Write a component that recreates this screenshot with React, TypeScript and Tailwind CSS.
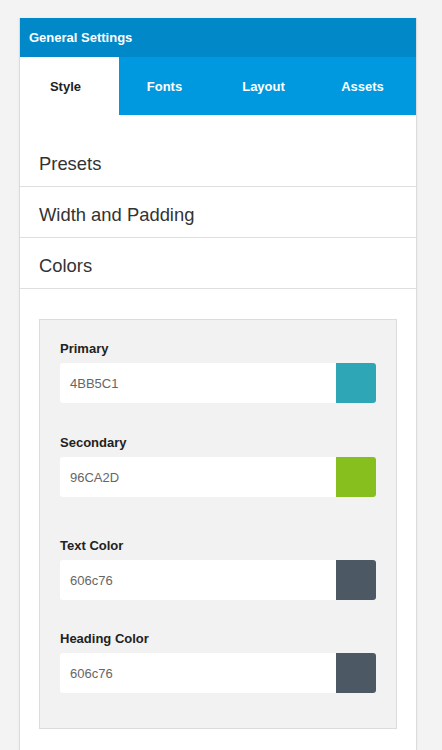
import { useState } from 'react'

type ColorField = {
  label: string
  value: string
  swatch: string
  gap: string
}

const tabs = ['Style', 'Fonts', 'Layout', 'Assets']
const sections = ['Presets', 'Width and Padding', 'Colors']

const colorFields: ColorField[] = [
  { label: 'Primary', value: '4BB5C1', swatch: '#2ea6b6', gap: 'mt-0' },
  { label: 'Secondary', value: '96CA2D', swatch: '#86bf1e', gap: 'mt-[32px]' },
  { label: 'Text Color', value: '606c76', swatch: '#4c5863', gap: 'mt-[41px]' },
  { label: 'Heading Color', value: '606c76', swatch: '#4c5863', gap: 'mt-[31px]' },
]

export default function App() {
  const [activeTab, setActiveTab] = useState('Style')

  return (
    <div
      className="min-h-[750px] bg-[#f3f3f3] pt-[18px]"
      style={{ fontFamily: '"Liberation Sans", Arial, sans-serif' }}
    >
      <div className="ml-[19px] w-[398px] min-h-[732px] bg-white border-x border-[#dcdcdc] shadow-[0_0_2px_rgba(0,0,0,0.06)]">
        {/* Header */}
        <div className="h-[39px] bg-[#0088c8] flex items-center pl-[9px] text-[13px] font-bold text-white">
          General Settings
        </div>

        {/* Tabs */}
        <div className="grid grid-cols-4 h-[58px] bg-[#0099e0]">
          {tabs.map(tab => (
            <button
              key={tab}
              onClick={() => setActiveTab(tab)}
              className={
                activeTab === tab
                  ? 'flex items-center justify-center pr-[8px] pt-[1px] text-[13px] font-bold bg-white text-[#222]'
                  : 'flex items-center justify-center pr-[8px] pt-[1px] text-[13px] font-bold text-white'
              }
            >
              {tab}
            </button>
          ))}
        </div>

        {/* Sections */}
        <div className="pt-[21px]">
          {sections.map(section => (
            <div
              key={section}
              className="h-[51px] flex items-center pt-[6px] pl-[19px] border-b border-[#dedede] text-[18.4px] text-[#333]"
            >
              {section}
            </div>
          ))}
        </div>

        {/* Colors panel */}
        <div className="px-[19px] pt-[30px] pb-[20px]">
          <div className="bg-[#f2f2f2] border border-[#dcdcdc] px-[20px] pt-[21px] pb-[35px]">
            {colorFields.map(field => (
              <div key={field.label} className={field.gap}>
                <div className="text-[13px] leading-[16px] font-bold text-[#222] mb-[6px]">
                  {field.label}
                </div>
                <div className="flex h-[40px] rounded-[3px] bg-white">
                  <div className="flex-1 flex items-center pl-[10px] pt-[1px] text-[13px] text-[#666]">
                    {field.value}
                  </div>
                  <div
                    className="w-[40px] rounded-r-[3px]"
                    style={{ backgroundColor: field.swatch }}
                  />
                </div>
              </div>
            ))}
          </div>
        </div>
      </div>
    </div>
  )
}
